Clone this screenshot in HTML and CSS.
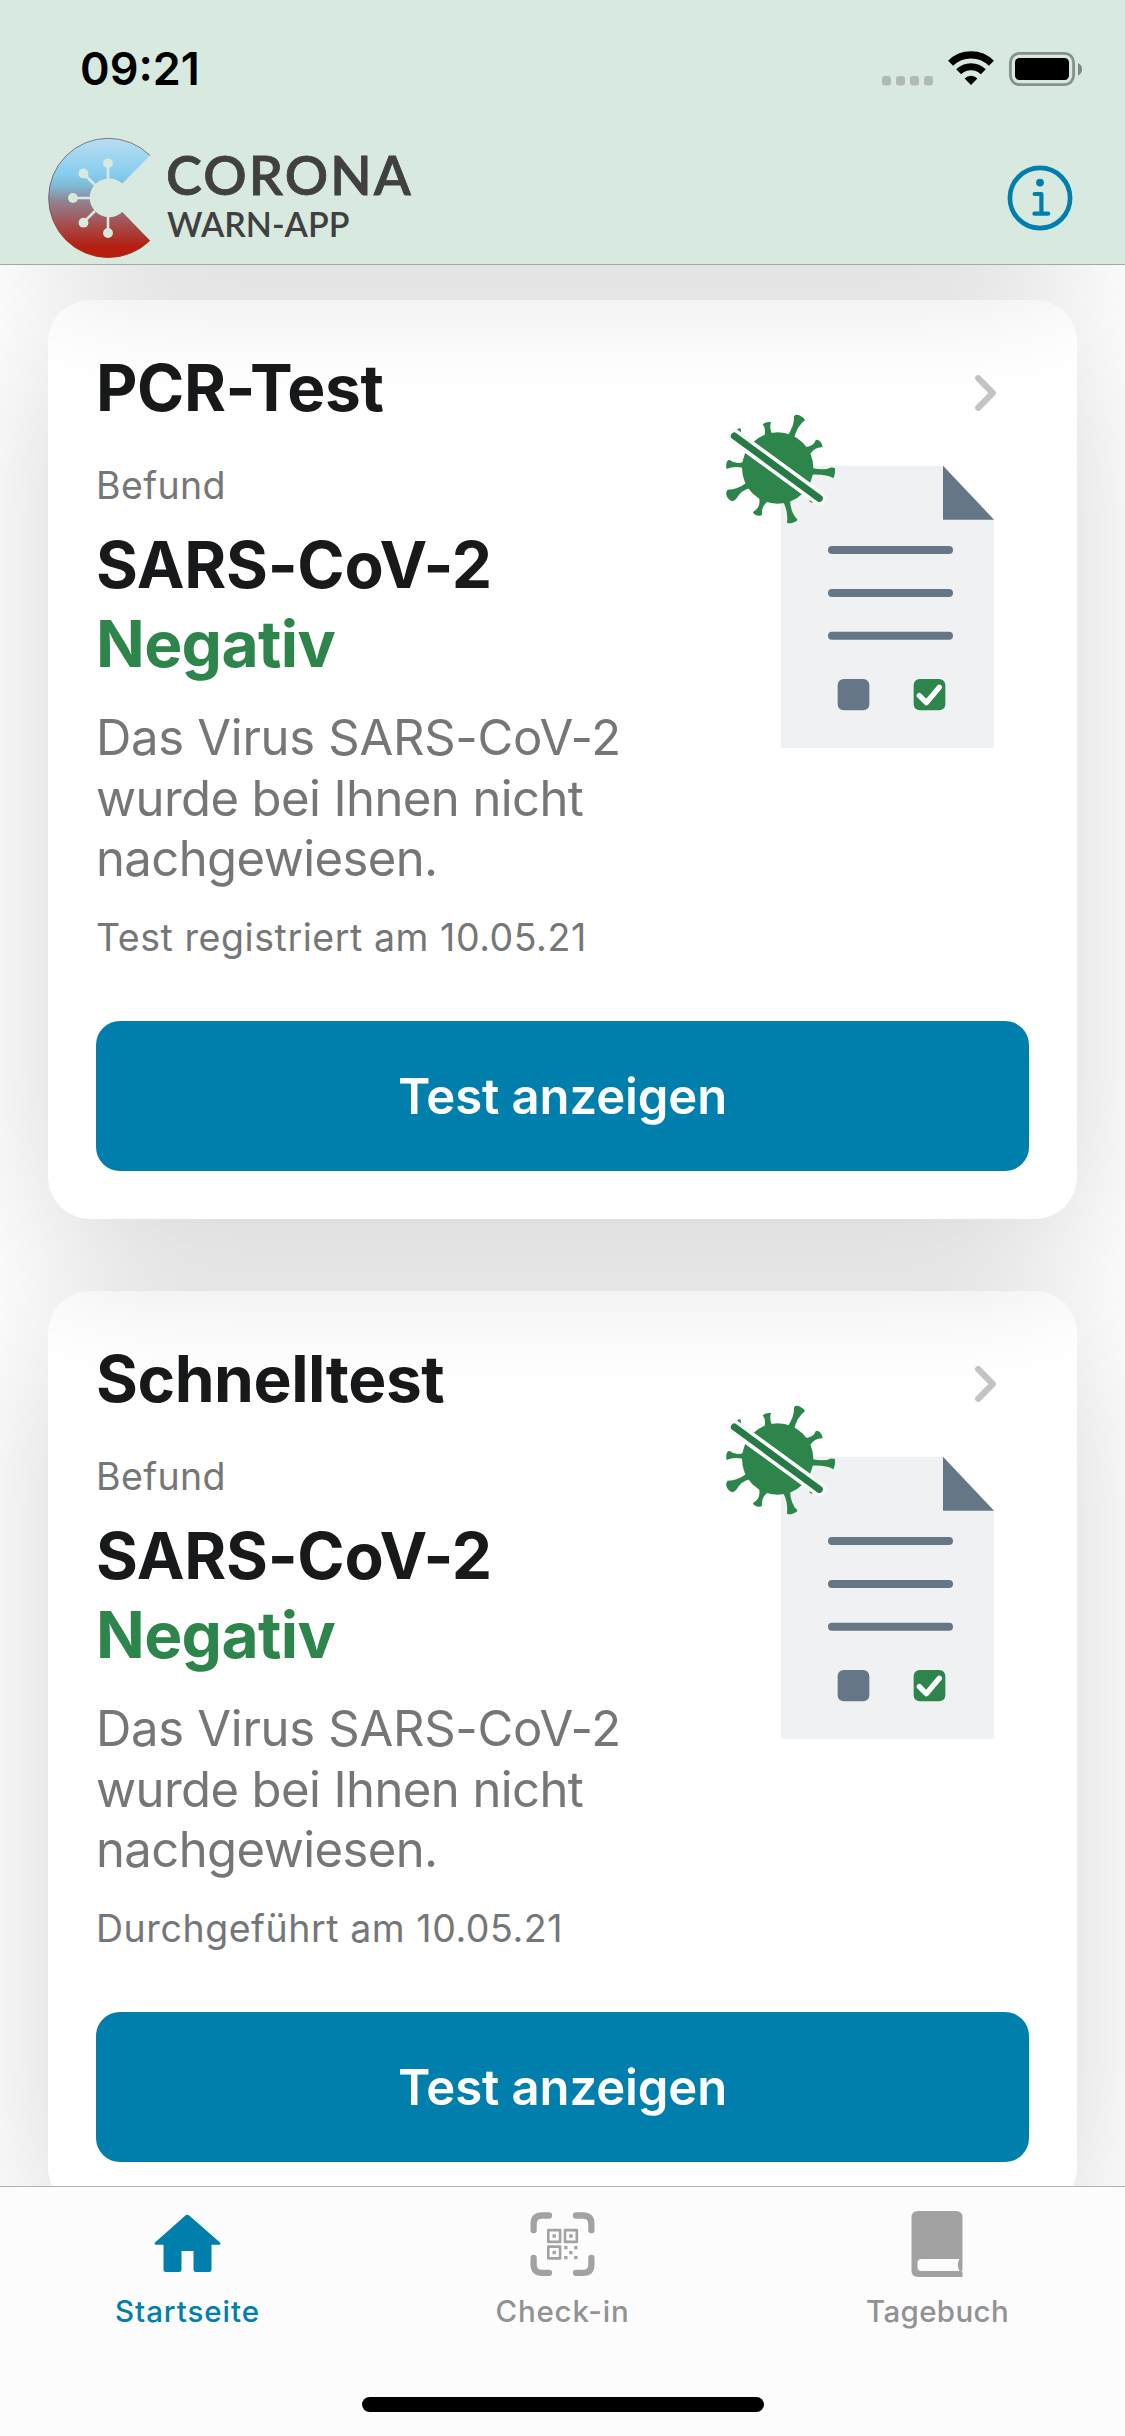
FILE: index.html
```html
<!DOCTYPE html>
<html lang="de">
<head>
<meta charset="utf-8">
<title>Corona-Warn-App</title>
<link rel="stylesheet" href="styles.css">
</head>
<body>
<svg class="defs" width="0" height="0" aria-hidden="true">
  <symbol id="chevron" viewBox="0 0 22 36">
    <path d="M3.2 3.2 17.8 18 3.2 32.8" fill="none" stroke="#c3c4c4" stroke-width="6.2" stroke-linecap="round" stroke-linejoin="round"/>
  </symbol>
  <symbol id="report" viewBox="78 192 810 1005">
    <path fill="#eff1f3" d="M242 347H730L882 508V1193H242z"/>
    <path fill="#657786" d="M729 347 882 509H729z"/>
    <path stroke="#657786" stroke-width="24" stroke-linecap="round" d="M396 600H747M396 729H747M396 857H747"/>
    <rect x="413" y="987" width="95" height="94" rx="18" fill="#657786"/>
    <rect x="641" y="987" width="95" height="94" rx="18" fill="#2e854b"/>
    <path d="M658 1037 679 1058 718 1012" fill="none" stroke="#fff" stroke-width="16" stroke-linecap="round" stroke-linejoin="round"/>
    <g fill="#2e854b">
      <circle cx="233" cy="354" r="107"/>
      <path d="M194 256Q198 236 188 223Q198 214 213 216Q207 234 217 254z"/>
      <path d="M262 258Q284 226 282 199Q287 192 298 196Q311 202 315 211Q292 226 281 268z"/>
      <path d="M312 292Q343 287 346 272Q351 265 360 274Q369 284 368 292Q346 290 328 314z"/>
      <path d="M334 354Q376 362 391 353Q399 352 405 355Q406 375 400 385Q380 372 334 374z"/>
      <path d="M250 456Q265 486 261 518Q269 521 278 518Q293 514 292 508Q272 490 270 450z"/>
      <path d="M177 442Q184 472 159 486Q160 494 174 497Q184 498 186 494Q184 468 202 456z"/>
      <path d="M139 398Q114 418 83 419Q76 426 80 438Q86 451 97 454Q105 452 110 445Q124 420 150 414z"/>
      <path d="M130 336Q107 344 89 330Q82 328 79 341Q78 352 80 357Q102 346 130 354z"/>
      <path d="M110 240Q116 233 122 236L124 248zM326 452 336 459 339 452z"/>
    </g>
    <path d="M102 258 358 445" stroke="#f8f8f8" stroke-width="42" stroke-linecap="round"/>
    <path d="M140 286 330 424" stroke="#fff" stroke-width="42"/>
    <path d="M103 258 358 445" stroke="#257a45" stroke-width="21" stroke-linecap="round"/>
  </symbol>
</svg>

<div class="app">
  <header class="header">
    <div class="status">
      <span class="time">09:21</span>
      <svg class="status-icons" viewBox="0 0 202 36" width="202" height="36">
        <g fill="#b0bab4"><rect x="2" y="25" width="9" height="9.4" rx="3"/><rect x="16" y="25" width="9" height="9.4" rx="3"/><rect x="30" y="25" width="9" height="9.4" rx="3"/><rect x="44" y="25" width="9" height="9.4" rx="3"/></g>
        <g fill="none" stroke="#000"><path d="M70.6 12.2A29 29 0 0 1 111.4 12.2" stroke-width="7.2"/><path d="M78.7 20.8A17.4 17.4 0 0 1 103.3 20.8" stroke-width="7"/></g>
        <path d="M91 34 84.6 27.4A9.3 9.3 0 0 1 97.4 27.4z"/>
        <rect x="130.4" y="2.4" width="63.2" height="31.2" rx="9" fill="none" stroke="#87918b" stroke-width="2.8"/>
        <rect x="135" y="7" width="54" height="22" rx="4.5"/>
        <path d="M198 12Q202 14 202 18.2T198 24.6z" fill="#7f8883"/>
      </svg>
    </div>
    <div class="brand-row">
      <div class="brand">
        <svg class="logo" viewBox="0 0 104 122" width="104" height="122">
          <defs>
            <linearGradient id="logo-fill" x1="0" y1="0" x2="0" y2="1">
              <stop offset="0" stop-color="#b9def2"/><stop offset=".3" stop-color="#86cdee"/><stop offset=".4" stop-color="#7fb9d6"/><stop offset=".53" stop-color="#90828f"/><stop offset=".72" stop-color="#a54f50"/><stop offset=".9" stop-color="#b42013"/><stop offset="1" stop-color="#b71c0e"/>
            </linearGradient>
            <linearGradient id="logo-rim" x1="0" y1="0" x2="0" y2="1">
              <stop offset="0" stop-color="#746f78"/><stop offset=".6" stop-color="#805660"/><stop offset="1" stop-color="#b71c0e"/>
            </linearGradient>
          </defs>
          <path d="M102 18.4A59.6 59.6 0 1 0 102 103.4L74.3 75A19.4 19.4 0 1 1 74.3 46.6z" fill="url(#logo-fill)"/>
          <path d="M102 18.4A59.6 59.6 0 1 0 102 103.4" fill="none" stroke="url(#logo-rim)" stroke-width=".9"/>
          <g stroke="#d8eadf" stroke-width="2.6"><path d="M60 43V26M60 79V96M42 61H25M47 48 35.3 36.3M47 74 35.3 85.7"/></g>
          <g fill="#d8eadf"><circle cx="60" cy="26.3" r="4.9"/><circle cx="35.5" cy="36.5" r="4.9"/><circle cx="25" cy="61" r="4.9"/><circle cx="35.5" cy="85.7" r="4.9"/><circle cx="60" cy="96" r="4.9"/></g>
        </svg>
        <div class="wordmark">
          <span class="word-top">CORONA</span>
          <span class="word-bottom">WARN-APP</span>
        </div>
      </div>
      <svg class="info" viewBox="0 0 66 66" width="66" height="66">
        <g fill="none" stroke="#007fad" stroke-linecap="round" stroke-linejoin="round"><circle cx="33" cy="33" r="30.1" stroke-width="4.7"/><path d="M27.6 29H34.4V48.6M27.4 48.7H41.2" stroke-width="4.2"/></g>
        <circle cx="33" cy="17.6" r="3.9" fill="#007fad"/>
      </svg>
    </div>
  </header>

  <main class="feed">
    <div class="card card-previous"></div>
    <section class="card card-pcr">
      <div class="card-body">
        <div class="card-text">
          <h2 class="title">PCR-Test</h2>
          <p class="caption befund">Befund</p>
          <h3 class="result">SARS-CoV-2<br><span class="negative">Negativ</span></h3>
          <p class="description">Das Virus SARS-CoV-2<br><span class="tight">wurde bei Ihnen nicht<br>nachgewiesen.</span></p>
          <p class="caption date">Test registriert am 10.05.21</p>
        </div>
        <div class="card-side">
          <svg class="chevron"><use href="#chevron"/></svg>
          <svg class="report"><use href="#report"/></svg>
        </div>
      </div>
      <button class="button">Test anzeigen</button>
    </section>
    <section class="card card-rapid">
      <div class="card-body">
        <div class="card-text">
          <h2 class="title">Schnelltest</h2>
          <p class="caption befund">Befund</p>
          <h3 class="result">SARS-CoV-2<br><span class="negative">Negativ</span></h3>
          <p class="description">Das Virus SARS-CoV-2<br><span class="tight">wurde bei Ihnen nicht<br>nachgewiesen.</span></p>
          <p class="caption date">Durchgeführt am 10.05.21</p>
        </div>
        <div class="card-side">
          <svg class="chevron"><use href="#chevron"/></svg>
          <svg class="report"><use href="#report"/></svg>
        </div>
      </div>
      <button class="button">Test anzeigen</button>
    </section>
  </main>

  <nav class="tabbar">
    <div class="tabs">
      <div class="tab tab-active">
        <svg viewBox="0 0 70 70" width="70" height="70" fill="currentColor"><path d="M32.4 5.4Q34.3 4 36.2 5.4L67 32.6Q68.4 34.7 66 34.8H58.5V59.5Q58.5 62 56 62H43Q40.5 62 40.5 59.5V41H28.5V59.5Q28.5 62 26 62H13Q10.5 62 10.5 59.5V34.8H3Q.6 34.7 2 32.6z"/></svg>
        <span>Startseite</span>
      </div>
      <div class="tab">
        <svg viewBox="0 0 70 70" width="70" height="70" fill="#a2a2a2">
          <path fill="none" stroke="#a2a2a2" stroke-width="6.3" stroke-linecap="round" d="M5.6 20.2V14Q5.6 5.5 14 5.5H21M48 5.5H55Q63.4 5.5 63.4 14V20.2M63.4 48V54.4Q63.4 62.8 55 62.8H48M21 62.8H14Q5.6 62.8 5.6 54.4V48"/>
          <path fill="none" stroke="#a2a2a2" stroke-width="2.6" stroke-linejoin="round" d="M20.3 20.1H32.1V31.9H20.3zM37 20.1H48.8V31.9H37zM20.3 36.6H32.1V48.4H20.3z"/>
          <path d="M24.5 24.3h3.4v3.4h-3.4zM41.2 24.3h3.4v3.4h-3.4zM24.5 40.8h3.4v3.4h-3.4zM36.2 36h3.3v3.3h-3.3zM46.2 36h3.3v3.3h-3.3zM41.2 41h3.3v3.3h-3.3zM36.2 46h3.3v3.3h-3.3zM46.2 46h3.3v3.3h-3.3z"/>
        </svg>
        <span class="label-checkin">Check-in</span>
      </div>
      <div class="tab">
        <svg viewBox="0 0 70 70" width="70" height="70" fill="#a2a2a2"><path fill-rule="evenodd" d="M15 1H53Q59.5 1 59.5 7.5V60L58.4 61.3Q59.5 61.3 59.5 63V67H15Q8.5 67 8.5 60.5V7.5Q8.5 1 15 1zM18.5 49Q14.5 49 14.5 53V57Q14.5 61 18.5 61H56.4Q53.2 55 56.4 49z"/></svg>
        <span class="label-diary">Tagebuch</span>
      </div>
    </div>
    <div class="home-indicator"></div>
  </nav>
</div>
</body>
</html>
```
FILE: styles.css
```css
* { box-sizing: border-box; }

body {
  margin: 0;
  background: #fff;
  font-family: Inter, "Liberation Sans", sans-serif;
  color: #17191a;
}

h2, h3, p { margin: 0; }

.defs { display: block; }

.app {
  display: flex;
  flex-direction: column;
  width: 1125px;
  height: 2436px;
  overflow: hidden;
}

/* Header */
.header {
  position: relative;
  z-index: 10;
  flex: none;
  height: 265px;
  background: #d8eadf;
  border-bottom: 1px solid #a2aaa5;
}

.status {
  display: flex;
  justify-content: space-between;
  align-items: flex-start;
  height: 137px;
  padding: 51px 43px 0 80px;
}

.time {
  font-size: 45px;
  line-height: 36px;
  font-weight: 600;
  color: #000;
}

.brand-row {
  display: flex;
  justify-content: space-between;
  padding: 0 52px 0 48px;
}

.brand { display: flex; }

.wordmark {
  display: flex;
  flex-direction: column;
  margin-left: 14px;
  font-family: Lato, "Liberation Sans", sans-serif;
  color: #404040;
}

.word-top {
  margin-top: 8px;
  font-size: 54px;
  line-height: 60px;
  font-weight: 600;
  letter-spacing: 2.1px;
  -webkit-text-stroke: .8px #404040;
}

.word-bottom {
  margin-top: -1px;
  padding-left: 1px;
  font-size: 34px;
  line-height: 40px;
  font-weight: 600;
  letter-spacing: 0;
}

.info { margin-top: 28px; }

/* Cards */
.feed {
  display: flex;
  flex: 1;
  flex-direction: column;
  gap: 72px;
  min-height: 0;
  padding: 0 48px;
}

.card {
  position: relative;
  flex: none;
  height: 919px;
  padding: 48px;
  border-radius: 42px;
  background: #fff;
  box-shadow: 0 34px 150px rgba(0, 0, 0, .165);
}

.card-previous { z-index: 4; margin-top: -956px; }
.card-pcr { z-index: 3; }
.card-rapid { z-index: 2; }

.card-body {
  display: flex;
  justify-content: space-between;
  height: 673px;
}

.title, .result { font-size: 64px; font-weight: 700; }
.title { line-height: 80px; letter-spacing: -.45px; }
.result { margin-top: 14.5px; line-height: 79.5px; letter-spacing: -.25px; }
.negative { color: #2e854b; letter-spacing: -.65px; }

.caption {
  font-size: 37.5px;
  line-height: 48px;
  letter-spacing: .4px;
  color: #757677;
}

.befund { margin-top: 34px; }
.date { margin-top: 24px; letter-spacing: .56px; }

.description {
  margin-top: 24.5px;
  font-size: 49px;
  line-height: 60.5px;
  letter-spacing: -.3px;
  color: #757677;
  white-space: nowrap;
}

.tight { letter-spacing: -.58px; }

.card-side {
  display: flex;
  flex-direction: column;
  align-items: flex-end;
  padding: 27px 33px 0 0;
}

.chevron { width: 22px; height: 36px; margin-right: -1px; }
.report { width: 270px; height: 335px; margin-top: 3px; }

.button {
  display: block;
  width: 100%;
  height: 150px;
  padding: 2px 0 0;
  border: 0;
  border-radius: 24px;
  background: #007fad;
  color: #fff;
  font: 600 49px/60px Inter, "Liberation Sans", sans-serif;
  letter-spacing: -.1px;
}

/* Tab bar */
.tabbar {
  position: relative;
  z-index: 10;
  display: flex;
  flex: none;
  flex-direction: column;
  justify-content: space-between;
  align-items: center;
  height: 250px;
  padding-bottom: 24px;
  border-top: 1px solid #b2b2b2;
  background: #fcfcfc;
}

.tabs { display: flex; width: 100%; }

.tab {
  display: flex;
  flex: 1;
  flex-direction: column;
  align-items: center;
  gap: 13px;
  padding-top: 23px;
  color: #919293;
  font-size: 29.5px;
  line-height: 36px;
  font-weight: 500;
  letter-spacing: .95px;
}

.tab-active { color: #007fad; }
.label-checkin { letter-spacing: .8px; }
.label-diary { letter-spacing: .35px; }

.home-indicator {
  width: 402px;
  height: 15px;
  border-radius: 8px;
  background: #000;
}
```
